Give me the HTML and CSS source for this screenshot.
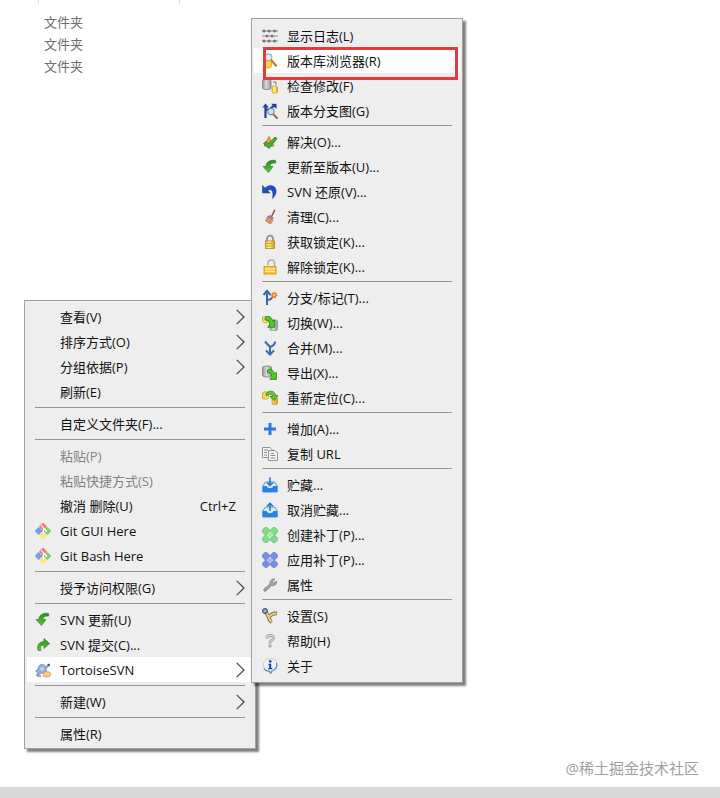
FILE: index.html
```html
<!DOCTYPE html>
<html lang="zh-CN">
<head>
<meta charset="utf-8">
<title>TortoiseSVN</title>
<link rel="stylesheet" href="styles.css">
</head>
<body>
<svg class="defs" aria-hidden="true">
  <defs>
    <linearGradient id="gold" x1="0" x2="1"><stop offset="0" stop-color="#f7cf3a"/><stop offset=".45" stop-color="#ffef8a"/><stop offset="1" stop-color="#dfa312"/></linearGradient>
    <linearGradient id="steel" x1="0" x2="1"><stop offset="0" stop-color="#9a9a9a"/><stop offset=".45" stop-color="#d8d8d8"/><stop offset="1" stop-color="#999"/></linearGradient>
    <linearGradient id="leaf" x1="0" x2="0" y1="0" y2="1"><stop offset="0" stop-color="#2f8a22"/><stop offset="1" stop-color="#4fd02c"/></linearGradient>
    <symbol id="chevron" viewBox="0 0 9 16"><path d="M.7.9 8 8 .7 15.100" fill="none" stroke="#4a4a4a" stroke-width="1.300"/></symbol>
    <symbol id="arrow-dr" viewBox="0 0 16 16"><path d="M3 2.500C7 .5 11 2.500 11.500 7L14 5.500V14H6L8.300 10.500C8 7 6.500 5.500 3 5.800Z" fill="#4dcc25" stroke="#1e7418" stroke-width=".9" stroke-linejoin="round"/></symbol>
    <symbol id="log" viewBox="0 0 16 16"><g stroke="#aaa" stroke-width="1.600"><path d="M0 3h16M0 8h16M0 13h16"/></g><g fill="#777"><circle cx="2" cy="3" r="1.500"/><circle cx="7" cy="3" r="1.500"/><circle cx="12.500" cy="3" r="1.500"/><circle cx="5" cy="8" r="1.500"/><circle cx="10" cy="8" r="1.500"/><circle cx="2" cy="13" r="1.500"/><circle cx="7" cy="13" r="1.500"/><circle cx="12.500" cy="13" r="1.500"/></g></symbol>
    <symbol id="browser" viewBox="0 0 16 16"><path d="M1.500 6c0-2 8-2 8 0v7.500c0 2-8 2-8 0Z" fill="#f9d62f" stroke="#d2a51f" stroke-width=".8"/><path d="m9 7 5 5.500" stroke="#bb7a45" stroke-width="2.200" stroke-linecap="round"/><circle cx="6.500" cy="4.300" r="3.500" fill="#dcecf8" stroke="#8b9cab"/></symbol>
    <symbol id="check" viewBox="0 0 16 16"><path d="M.5 3c0-2 8.500-2 8.500 0v7c0 2-8.500 2-8.500 0Z" fill="url(#steel)" stroke="#777" stroke-width=".8"/><path d="M10 9c0-1.500 5.500-1.500 5.500 0v5c0 1.500-5.500 1.500-5.500 0Z" fill="url(#gold)" stroke="#d79910" stroke-width=".8"/><path d="M11 4h3v3" fill="none" stroke="#777"/></symbol>
    <symbol id="graph" viewBox="0 0 16 16"><path d="M3.500 15V3M3.500 6.500h4L12 2.500" stroke="#203f9b" stroke-width="2.200" fill="none"/><path d="M.3 4.500 3.500.5l3.300 4ZM9 .7h5.500V6Z" fill="#203f9b"/><path d="m11 11 4 4" stroke="#ae6b3a" stroke-width="2" stroke-linecap="round"/><circle cx="9" cy="8.500" r="3.300" fill="#cfe0f5" stroke="#607fac"/></symbol>
    <symbol id="resolve" viewBox="0 0 16 16"><path d="m7 2.500 5 9.500H2Z" fill="#f0a04a" stroke="#d07a28" stroke-linejoin="round"/><path d="m1.500 9.500 2.500-2 2.500 2.500L13 3l2 1.500-8 10Z" fill="#3eb526" stroke="#217e18" stroke-width=".8"/></symbol>
    <symbol id="update" viewBox="0 0 16 16"><path d="M13.500 1.500C8 .5 4 3 3.800 7.500H1l5.500 6L11 7.500H8C8 5 10 3.500 13.800 4Z" fill="url(#leaf)" stroke="#34862a" stroke-width=".7"/></symbol>
    <symbol id="commit" viewBox="0 0 16 16"><path d="M3 13.500C1.500 8 4.500 4.500 9 4.600V1.500l5.500 5L9 11.500V8.300C6 8 4.500 9.500 6 13.500Z" fill="url(#leaf)" stroke="#34862a" stroke-width=".7"/></symbol>
    <symbol id="revert" viewBox="0 0 16 16"><path d="M.5 1.500V9H8L5.800 6.600C9 4.500 12 6.500 10.500 14.500 16.500 9 14.500 2 9 1.600 6.500 1.500 4.700 2.500 3.200 4Z" fill="#1f4fc0" stroke="#153a97" stroke-width=".5"/></symbol>
    <symbol id="broom" viewBox="0 0 16 16"><path d="m12.500 1.500-3 6" stroke="#8c5638" stroke-width="1.600" stroke-linecap="round"/><path d="M5.500 7.500 7.500 6l4 2.500-.5 2.500Z" fill="#7483b9"/><path d="m5.500 7.500 5.500 4-2.500 3.500-5-3Z" fill="#e7a167" stroke="#b9713c" stroke-width=".7"/><path d="m6.500 9-1.500 3.500M8.800 10.500 7 14" stroke="#b9713c" stroke-width=".7"/></symbol>
    <symbol id="lock" viewBox="0 0 16 16"><path d="M5 8V5c0-4.500 6-4.500 6 0v3" fill="none" stroke="#929292" stroke-width="1.800"/><rect x="3.500" y="7" width="9" height="7.500" fill="url(#gold)" stroke="#b58a19" stroke-width=".8"/><path d="M4 9.500h8M4 12h8" stroke="#d6a021"/></symbol>
    <symbol id="unlock" viewBox="0 0 16 16"><path d="M6 6V4c0-4 6.500-4 6.500 0v4" fill="none" stroke="#b0b0b0" stroke-width="1.600"/><rect x="2" y="7.500" width="12" height="7.500" fill="#ffc42e" stroke="#d38a16" stroke-width=".8"/><path d="M3 10h10M3 12.500h10" stroke="#fff0a6" stroke-width="1"/></symbol>
    <symbol id="branch" viewBox="0 0 16 16"><path d="M5 15V3M5 10c3 0 5-1 6-4" stroke="#3567ad" stroke-width="2" fill="none"/><path d="M1.500 5 5 .8 8.500 5" stroke="#3567ad" stroke-width="2" fill="none"/><path d="m12 1 1 2 2-.5-.7 2 1.700 1.300-2 .7-.2 2.200-1.800-1.300-1.800 1 0-2.200-2-1 1.900-1-.4-2 2 .6Z" fill="#f47834"/><circle cx="12" cy="5" r="1" fill="#ffe6a4"/></symbol>
    <symbol id="switch" viewBox="0 0 16 16"><path d="M8 6c0-1.500 7.500-1.500 7.500 0v8.500c0 1.500-7.500 1.500-7.500 0Z" fill="url(#steel)" stroke="#888" stroke-width=".7"/><path d="M.5 2.500c0-1.500 6-1.500 6 0v4c0 1.500-6 1.500-6 0Z" fill="url(#gold)" stroke="#c6981d" stroke-width=".7"/><use href="#arrow-dr" width="15" height="14"/></symbol>
    <symbol id="merge" viewBox="0 0 16 16"><path d="M3 1.500 8 7v7M13 1.500c0 3-1.500 4.500-5 5.500M4 10.500 8 14.500l4-4" fill="none" stroke="#376bb2" stroke-width="2"/></symbol>
    <symbol id="export" viewBox="0 0 16 16"><path d="M.5 2.500c0-2 9-2 9 0v8c0 2-9 2-9 0Z" fill="url(#steel)" stroke="#777" stroke-width=".8"/><use href="#arrow-dr" x="3" y="3" width="13" height="13"/></symbol>
    <symbol id="relocate" viewBox="0 0 16 16"><path d="M.5 3c0-1.500 6-1.500 6 0v5c0 1.500-6 1.500-6 0ZM10 8c0-1.500 5.500-1.500 5.500 0v5.500c0 1.500-5.500 1.500-5.500 0Z" fill="url(#gold)" stroke="#c6981d" stroke-width=".7"/><path d="M4 3.500C8-.5 13 1 13.500 5.500H16l-4 5-4-4h2.500C10 4 7.500 3.500 4.500 6Z" fill="#65c829" stroke="#2c8320" stroke-width=".8"/></symbol>
    <symbol id="add" viewBox="0 0 16 16"><path d="M8 2v12M2 8h12" stroke="#2f78e8" stroke-width="3"/></symbol>
    <symbol id="copy" viewBox="0 0 16 16"><g fill="#f7f7f7" stroke="#929292"><path d="M.5 1.500H8l2 2v8H.5Z"/><path d="M6.500 4.500h6.500l2.500 2.500v7.500h-9Z"/></g><path d="M2 4h4M2 6.500h3M2 9h3M8.500 7.500H12M8.500 9.500h5M8.500 12h5" stroke="#8b8b8b"/></symbol>
    <symbol id="tray" viewBox="0 0 16 16"><path d="M1 8.500 3.500 5h9L15 8.500V15H1Z" fill="#ddecfb" stroke="#4192ea" stroke-width="1"/><path d="M.5 9h4.300c.4 3 6 3 6.400 0h4.300v6H.5Z" fill="#2781e9"/></symbol>
    <symbol id="stash" viewBox="0 0 16 16"><use href="#tray"/><path d="M8 .5V8M5 5.500 8 8.500l3-3" fill="none" stroke="#2773ca" stroke-width="1.500"/></symbol>
    <symbol id="unstash" viewBox="0 0 16 16"><use href="#tray"/><path d="M8 9V1.500M5 4.200 8 1.200l3 3" fill="none" stroke="#2773ca" stroke-width="1.500"/></symbol>
    <symbol id="patch" viewBox="0 0 16 16"><g stroke="#777" stroke-opacity=".6" stroke-width=".7"><rect x="-1" y="4.800" width="18" height="6.500" rx="2" transform="rotate(45 8 8)"/><rect x="-1" y="4.800" width="18" height="6.500" rx="2" transform="rotate(-45 8 8)"/></g><path d="m8 4 4 4-4 4-4-4Z" fill="#fff" fill-opacity=".3"/><g fill="#fff"><circle cx="8" cy="6" r=".6"/><circle cx="8" cy="10" r=".6"/><circle cx="6" cy="8" r=".6"/><circle cx="10" cy="8" r=".6"/></g></symbol>
    <symbol id="wrench" viewBox="0 0 16 16"><path d="M2 12 8 7C7.500 3.500 10 1.500 13 2l-2.500 2.800 1.300 1.400L14.500 4c.5 3-2 5.200-5 4.600L4 14c-1.500 1-3-.7-2-2Z" fill="#a5a5a5" stroke="#7d7d7d" stroke-width=".8"/></symbol>
    <symbol id="settings" viewBox="0 0 16 16"><path d="M3 2.500 6.500 9c.5 2 1 3.500 3 5.500M7 9c2-3 4-4 8-3.500" fill="none" stroke="#85703f" stroke-width="3.600"/><path d="M4 4 6.700 9c.5 2 1 3.300 2.500 5M7 9c2-2.800 4-3.700 7.500-3.400" fill="none" stroke="#e6cd8c" stroke-width="2"/><circle cx="3" cy="3" r="2.500" fill="#718cae" stroke="#435570"/><circle cx="3" cy="3" r=".8" fill="#e9eef5"/></symbol>
    <symbol id="help" viewBox="0 0 16 16"><path d="M5 5.500C5 1.500 11.500 1.500 11.500 5 11.500 7.500 8 7 8 10.500" fill="none" stroke="#959595" stroke-width="2.800"/><path d="M5 5.500C5 1.500 11.500 1.500 11.500 5 11.500 7.500 8 7 8 10.500" fill="none" stroke="#dedede" stroke-width="1.200"/><circle cx="8" cy="13" r="1.300" fill="#ddd" stroke="#959595" stroke-width=".8"/></symbol>
    <symbol id="about" viewBox="0 0 16 16"><path d="M8 .6a7.300 6.500 0 0 1 2.500 12.600L9 15.600l-2-2.200A7.300 6.500 0 0 1 8 .6Z" fill="#eef4fb" stroke="#b4c4d8" stroke-width=".8"/><path d="M14.500 5c1 3.500-1 7.300-4.500 8L8.800 15 7 13.200C5 13 3 12.300 1.800 10.500" fill="none" stroke="#5487c2" stroke-width="1.200"/><circle cx="8.200" cy="3.400" r="1.300" fill="#123fba"/><path d="M6.300 5.700h2.900v4.400h1.100v1.100H6.200v-1.100h1V6.800h-.9Z" fill="#123fba"/></symbol>
    <symbol id="git" viewBox="0 0 16 16"><g transform="rotate(45 8 8)"><rect x="2" y="2" width="5.900" height="5.900" rx=".8" fill="#f9787c"/><rect x="8.100" y="2" width="5.900" height="5.900" rx=".8" fill="#85cc6b"/><rect x="2" y="8.100" width="5.900" height="5.900" rx=".8" fill="#739df6"/><rect x="8.100" y="8.100" width="5.900" height="5.900" rx=".8" fill="#ffe57c"/></g><path d="m6 2 2.500 3v6M8.500 5 11 7.500" fill="none" stroke="#fff" stroke-width="1.100"/><circle cx="11.300" cy="8" r="1.100" fill="#fff"/></symbol>
    <symbol id="tortoise" viewBox="0 0 16 16"><path d="M2.500 8c.5-3.500 2-5.500 4.500-5.500s4.500 2 4.500 5-2 3.500-4 3.300L4 12.500l-3 .8 2-2.500L.5 9Z" fill="#94aee3" stroke="#7189bf" stroke-width=".8"/><path d="M5 5.500 8 5l1.500 2L7.500 9 5 8Z" fill="#bdcff2"/><path d="m10.500 5 2-3c1-1 3 .2 2.500 1.500L12.500 6Z" fill="#7f9fbb"/><circle cx="14" cy="2.700" r="1" fill="#25596c"/><path d="M2 14h4" stroke="#718cc3" stroke-width="1.500"/><rect x="8" y="9.800" width="7.500" height="5" rx="2.400" fill="#ffd079" stroke="#c99039" stroke-width=".8"/></symbol>
  </defs>
</svg>

<main class="desktop">
  <div class="columns" aria-hidden="true"><i></i><i></i></div>
  <ul class="files">
    <li>文件夹</li>
    <li>文件夹</li>
    <li>文件夹</li>
  </ul>

  <div class="menu menu-main" role="menu">
    <button class="item" role="menuitem"><span class="icon"></span><span class="label">查看(V)</span><svg class="chevron"><use href="#chevron"/></svg></button>
    <button class="item" role="menuitem"><span class="icon"></span><span class="label">排序方式(O)</span><svg class="chevron"><use href="#chevron"/></svg></button>
    <button class="item" role="menuitem"><span class="icon"></span><span class="label">分组依据(P)</span><svg class="chevron"><use href="#chevron"/></svg></button>
    <button class="item" role="menuitem"><span class="icon"></span><span class="label">刷新(E)</span></button>
    <hr class="sep">
    <button class="item" role="menuitem"><span class="icon"></span><span class="label">自定义文件夹(F)...</span></button>
    <hr class="sep">
    <button class="item" role="menuitem" disabled><span class="icon"></span><span class="label">粘贴(P)</span></button>
    <button class="item" role="menuitem" disabled><span class="icon"></span><span class="label">粘贴快捷方式(S)</span></button>
    <button class="item" role="menuitem"><span class="icon"></span><span class="label">撤消 删除(U)</span><kbd class="shortcut">Ctrl+Z</kbd></button>
    <button class="item" role="menuitem"><svg class="icon"><use href="#git"/></svg><span class="label">Git GUI Here</span></button>
    <button class="item" role="menuitem"><svg class="icon"><use href="#git"/></svg><span class="label">Git Bash Here</span></button>
    <hr class="sep">
    <button class="item" role="menuitem"><span class="icon"></span><span class="label">授予访问权限(G)</span><svg class="chevron"><use href="#chevron"/></svg></button>
    <hr class="sep">
    <button class="item" role="menuitem"><svg class="icon"><use href="#update"/></svg><span class="label">SVN 更新(U)</span></button>
    <button class="item" role="menuitem"><svg class="icon"><use href="#commit"/></svg><span class="label">SVN 提交(C)...</span></button>
    <button class="item active" role="menuitem"><svg class="icon"><use href="#tortoise"/></svg><span class="label">TortoiseSVN</span><svg class="chevron"><use href="#chevron"/></svg></button>
    <hr class="sep">
    <button class="item" role="menuitem"><span class="icon"></span><span class="label">新建(W)</span><svg class="chevron"><use href="#chevron"/></svg></button>
    <hr class="sep">
    <button class="item" role="menuitem"><span class="icon"></span><span class="label">属性(R)</span></button>
  </div>

  <div class="menu menu-sub" role="menu">
    <button class="item" role="menuitem"><svg class="icon"><use href="#log"/></svg><span class="label">显示日志(L)</span></button>
    <button class="item active marked" role="menuitem"><svg class="icon"><use href="#browser"/></svg><span class="label">版本库浏览器(R)</span></button>
    <button class="item" role="menuitem"><svg class="icon"><use href="#check"/></svg><span class="label">检查修改(F)</span></button>
    <button class="item" role="menuitem"><svg class="icon"><use href="#graph"/></svg><span class="label">版本分支图(G)</span></button>
    <hr class="sep">
    <button class="item" role="menuitem"><svg class="icon"><use href="#resolve"/></svg><span class="label">解决(O)...</span></button>
    <button class="item" role="menuitem"><svg class="icon"><use href="#update"/></svg><span class="label">更新至版本(U)...</span></button>
    <button class="item" role="menuitem"><svg class="icon"><use href="#revert"/></svg><span class="label">SVN 还原(V)...</span></button>
    <button class="item" role="menuitem"><svg class="icon"><use href="#broom"/></svg><span class="label">清理(C)...</span></button>
    <button class="item" role="menuitem"><svg class="icon"><use href="#lock"/></svg><span class="label">获取锁定(K)...</span></button>
    <button class="item" role="menuitem"><svg class="icon"><use href="#unlock"/></svg><span class="label">解除锁定(K)...</span></button>
    <hr class="sep">
    <button class="item" role="menuitem"><svg class="icon"><use href="#branch"/></svg><span class="label">分支/标记(T)...</span></button>
    <button class="item" role="menuitem"><svg class="icon"><use href="#switch"/></svg><span class="label">切换(W)...</span></button>
    <button class="item" role="menuitem"><svg class="icon"><use href="#merge"/></svg><span class="label">合并(M)...</span></button>
    <button class="item" role="menuitem"><svg class="icon"><use href="#export"/></svg><span class="label">导出(X)...</span></button>
    <button class="item" role="menuitem"><svg class="icon"><use href="#relocate"/></svg><span class="label">重新定位(C)...</span></button>
    <hr class="sep">
    <button class="item" role="menuitem"><svg class="icon"><use href="#add"/></svg><span class="label">增加(A)...</span></button>
    <button class="item" role="menuitem"><svg class="icon"><use href="#copy"/></svg><span class="label">复制 URL</span></button>
    <hr class="sep">
    <button class="item" role="menuitem"><svg class="icon"><use href="#stash"/></svg><span class="label">贮藏...</span></button>
    <button class="item" role="menuitem"><svg class="icon"><use href="#unstash"/></svg><span class="label">取消贮藏...</span></button>
    <button class="item" role="menuitem"><svg class="icon patch-green"><use href="#patch"/></svg><span class="label">创建补丁(P)...</span></button>
    <button class="item" role="menuitem"><svg class="icon patch-blue"><use href="#patch"/></svg><span class="label">应用补丁(P)...</span></button>
    <button class="item" role="menuitem"><svg class="icon"><use href="#wrench"/></svg><span class="label">属性</span></button>
    <hr class="sep">
    <button class="item" role="menuitem"><svg class="icon"><use href="#settings"/></svg><span class="label">设置(S)</span></button>
    <button class="item" role="menuitem"><svg class="icon"><use href="#help"/></svg><span class="label">帮助(H)</span></button>
    <button class="item" role="menuitem"><svg class="icon"><use href="#about"/></svg><span class="label">关于</span></button>
  </div>

  <footer class="footer">
    <p class="watermark">@稀土掘金技术社区</p>
    <div class="statusbar"></div>
  </footer>
</main>
</body>
</html>
```
FILE: styles.css
```css
* {
  box-sizing: border-box;
}

body {
  margin: 0;
  background: #fff;
  color: #111;
  font-family: "Open Sans", "Noto Sans CJK SC", sans-serif;
  font-size: 13px;
}

.defs {
  position: absolute;
  width: 0;
  height: 0;
}

.desktop {
  position: relative;
  display: flex;
  flex-direction: column;
  min-height: 100vh;
}

/* File list behind the menus */
.columns {
  display: flex;
  gap: 140px;
  height: 4px;
  padding-left: 38px;
}

.columns i {
  width: 1px;
  background: #dcdcdc;
}

.files {
  flex: 1;
  margin: 0;
  padding: 7px 0 0 44px;
  list-style: none;
  color: #6e6e6e;
  line-height: 22px;
}

/* Menus float over the file list */
.menu {
  position: absolute;
  display: flex;
  flex-direction: column;
  border: 1px solid #a0a0a0;
  background: #eee;
  box-shadow: 3px 3px 2px rgba(0, 0, 0, 0.5);
}

.menu-main {
  left: 24px;
  top: 300px;
  width: 232px;
  padding: 3px 2px 2px;
}

.menu-sub {
  left: 251px;
  top: 18px;
  width: 212px;
  padding: 4px 2px;
}

.item {
  position: relative;
  display: flex;
  align-items: center;
  height: 25px;
  padding: 0 8px;
  border: 0;
  background: none;
  color: inherit;
  font: inherit;
  line-height: 24px;
  text-align: left;
  white-space: nowrap;
}

.item:disabled {
  color: #838383;
}

.item.active {
  background: #fff;
}

.icon {
  flex: none;
  width: 16px;
  height: 16px;
  margin-right: 9px;
}

.label {
  flex: 1;
}

.chevron {
  width: 9px;
  height: 16px;
}

.shortcut {
  margin-right: 9px;
  font: inherit;
}

.sep {
  width: auto;
  height: 1px;
  margin: 3px 8px;
  border: 0;
  background: #959595;
}

.menu-sub .sep {
  margin-top: 2px;
}

.patch-green {
  fill: #7be37f;
}

.patch-blue {
  fill: #718ff0;
}

/* Red callout frame round the highlighted entry */
.marked::after {
  content: "";
  position: absolute;
  z-index: 1;
  inset: -1px 2px -7px 9px;
  border: 3px solid #e83a3c;
}

.footer {
  text-align: right;
}

.watermark {
  margin: 0 21px 9px 0;
  color: #a0a0a0;
  font-size: 15px;
  line-height: 20px;
}

.statusbar {
  height: 11px;
  background: #d9d9d9;
}
```
